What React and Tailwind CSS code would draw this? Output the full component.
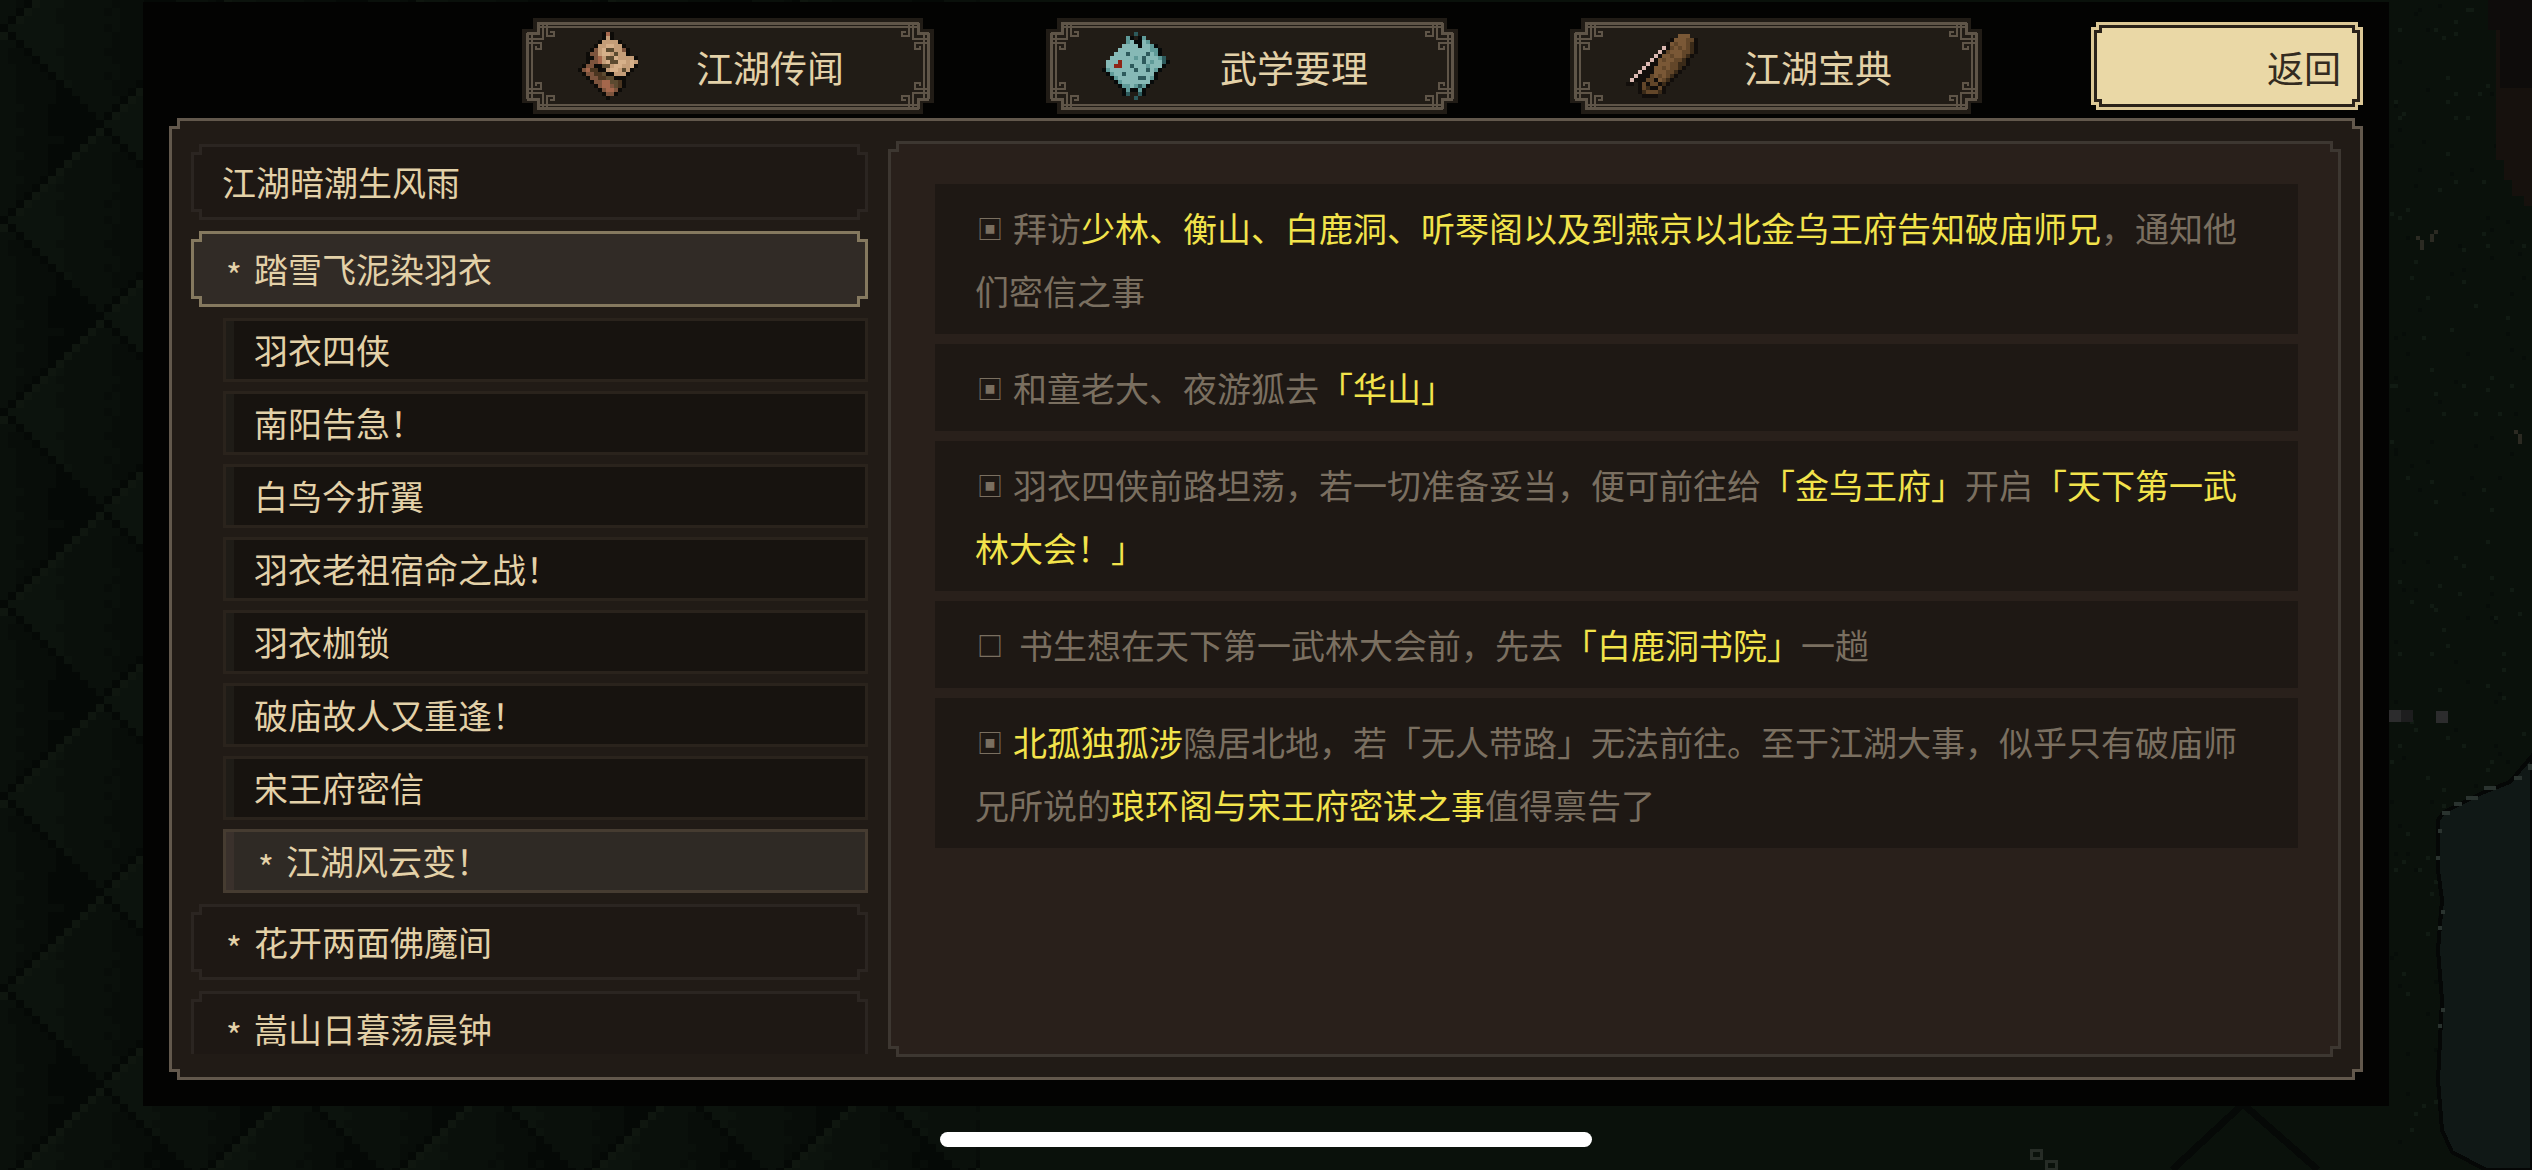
import React, { useState } from 'react';

const NOTCH =
  '[clip-path:polygon(8px_0,calc(100%_-_8px)_0,calc(100%_-_8px)_8px,100%_8px,100%_calc(100%_-_8px),calc(100%_-_8px)_calc(100%_-_8px),calc(100%_-_8px)_100%,8px_100%,8px_calc(100%_-_8px),0_calc(100%_-_8px),0_8px,8px_8px)]';
const NOTCH_SM =
  '[clip-path:polygon(5px_0,calc(100%_-_5px)_0,calc(100%_-_5px)_5px,100%_5px,100%_calc(100%_-_5px),calc(100%_-_5px)_calc(100%_-_5px),calc(100%_-_5px)_100%,5px_100%,5px_calc(100%_-_5px),0_calc(100%_-_5px),0_5px,5px_5px)]';
const NOTCH_LG =
  '[clip-path:polygon(11px_0,calc(100%_-_11px)_0,calc(100%_-_11px)_11px,100%_11px,100%_calc(100%_-_11px),calc(100%_-_11px)_calc(100%_-_11px),calc(100%_-_11px)_100%,11px_100%,11px_calc(100%_-_11px),0_calc(100%_-_11px),0_11px,11px_11px)]';

const SPRITES = {
  book: {
    colors: { k: '#0d0b08', t: '#c49d78', l: '#d6b08a', b: '#7d543d', d: '#4a3520', r: '#a5674c', o: '#5c4a30' },
    rows: [
      '......krk......',
      '......ktk......',
      '.....kttttk....',
      '....kttllttk...',
      '...kbtloottbk..',
      '..kbbtlltottk..',
      '..kkbrtoolttttk',
      '..kbbrtloolltlt',
      '.kbbkkootllttlk',
      'kbrddkktlltotk.',
      '.kbbddokktttk..',
      '..kbbddookkk...',
      '...kbbrroodk...',
      '....kbrrbodk...',
      '.....kbrrbk....',
      '......kbbk.....',
      '.......k.......',
    ],
  },
  manual: {
    colors: { c: '#86b9b6', t: '#5f9a98', d: '#2d5a5c', k: '#070a0a', r: '#8e2416' },
    rows: [
      '........d........',
      '......tk.kt......',
      '......tckkct.....',
      '.....cccckcctk...',
      '....ccccccccttk..',
      '...cccdccccdctk..',
      '..cccccctcdccctd.',
      '.cccrcccccdctccdk',
      '.ccrrccdccctccck.',
      'ktccccccdccdctk..',
      '.ktccdccccccck...',
      '..ktcccccddctk...',
      '...ktccccccck....',
      '....kttctdtk.....',
      '.....ktkktk......',
      '.....kd..dk......',
      '........d........',
    ],
  },
  scroll: {
    colors: { w: '#dcb9b2', b: '#7a5836', m: '#624629', d: '#3a2a18', k: '#120e0b' },
    rows: [
      '.............bbb..',
      '...........kbbbmmk',
      '..........kbmbbmdk',
      '.........wkmbmbmdk',
      '........wkmbbbmmdk',
      '.......wkbbmbbmdk.',
      '......wkbmbbmmdk..',
      '.....wkkbbbmmddk..',
      '....wkkbbmbmmdk...',
      '...wkkkbbbmmdk....',
      '..wkkkmbmbmdk.....',
      '.wkkkmmkbmdk......',
      'kk.kmkmmkdk.......',
      '...kmdkkmk........',
      '...kdmmmdk........',
      '....kkkk..........',
    ],
  },
};

const TABS = [
  { id: 'rumor', label: '江湖传闻', icon: 'book' },
  { id: 'martial', label: '武学要理', icon: 'manual' },
  { id: 'treasure', label: '江湖宝典', icon: 'scroll' },
];

const CHAPTERS = [
  { title: '江湖暗潮生风雨' },
  {
    title: '踏雪飞泥染羽衣',
    unread: true,
    children: [
      { title: '羽衣四侠' },
      { title: '南阳告急！' },
      { title: '白鸟今折翼' },
      { title: '羽衣老祖宿命之战！' },
      { title: '羽衣枷锁' },
      { title: '破庙故人又重逢！' },
      { title: '宋王府密信' },
      { title: '江湖风云变！', unread: true },
    ],
  },
  { title: '花开两面佛魔间', unread: true },
  { title: '嵩山日暮荡晨钟', unread: true },
];

// [text, highlighted]
const QUESTS = [
  {
    done: true,
    parts: [
      ['拜访', false],
      ['少林、衡山、白鹿洞、听琴阁以及到燕京以北金乌王府告知破庙师兄', true],
      ['，通知他们密信之事', false],
    ],
  },
  {
    done: true,
    parts: [
      ['和童老大、夜游狐去', false],
      ['「华山」', true],
    ],
  },
  {
    done: true,
    parts: [
      ['羽衣四侠前路坦荡，若一切准备妥当，便可前往给', false],
      ['「金乌王府」', true],
      ['开启', false],
      ['「天下第一武林大会！」', true],
    ],
  },
  {
    done: false,
    parts: [
      ['书生想在天下第一武林大会前，先去', false],
      ['「白鹿洞书院」', true],
      ['一趟', false],
    ],
  },
  {
    done: true,
    parts: [
      ['北孤独孤涉', true],
      ['隐居北地，若「无人带路」无法前往。至于江湖大事，似乎只有破庙师兄所说的', false],
      ['琅环阁与宋王府密谋之事', true],
      ['值得禀告了', false],
    ],
  },
];

const noise = (x, y) => {
  const n = Math.sin(x * 127.1 + y * 311.7) * 43758.5453;
  return n - Math.floor(n);
};

const Sprite = ({ name }) => {
  const { rows, colors } = SPRITES[name];
  const cols = rows[0].length;
  return (
    <svg width={cols * 4} height={rows.length * 4} viewBox={`0 0 ${cols} ${rows.length}`} shapeRendering="crispEdges" aria-hidden="true">
      {rows.flatMap((row, y) =>
        [...row].map((c, x) => (colors[c] ? <rect key={`${x}-${y}`} x={x} y={y} width="1" height="1" fill={colors[c]} /> : null))
      )}
    </svg>
  );
};

const tileColor = (x, y) => {
  const a = (x + y - 3 + 48) % 24;
  const b = (x - y + 3 + 48) % 24;
  if (a === 0 || b === 0) return '#050906';
  const depth = a + b + noise(x, y) * 5;
  if (a < 2 && b > 2) return '#0f160f';
  if (depth < 17) return '#0c130d';
  if (depth < 30) return '#0a100b';
  if (depth < 39) return '#080d09';
  return '#050906';
};

const TILE = Array.from({ length: 576 }, (_, i) => [i % 24, Math.floor(i / 24)]);

const GRASS = Array.from({ length: 260 }, (_, i) => [
  2390 + Math.floor(noise(i, 1) * 34) * 4,
  Math.floor(noise(i, 2) * 290) * 4,
  noise(i, 3) > 0.5 ? '#111b13' : '#070d09',
]);

const Scenery = () => (
  <svg className="absolute inset-0 w-full h-full" viewBox="0 0 2532 1170" preserveAspectRatio="xMidYMid slice" shapeRendering="crispEdges" aria-hidden="true">
    <defs>
      <pattern id="scales" width="192" height="192" patternUnits="userSpaceOnUse">
        {TILE.map(([x, y]) => (
          <rect key={`${x}-${y}`} x={x * 8} y={y * 8} width="8" height="8" fill={tileColor(x, y)} />
        ))}
      </pattern>
    </defs>
    <rect width="2532" height="1170" fill="#0a110b" />
    <rect width="980" height="1170" fill="url(#scales)" />
    {GRASS.map(([x, y, fill], i) => (
      <rect key={i} x={x} y={y} width="4" height="4" fill={fill} />
    ))}
    <path d="M2488 0H2532V206H2524V196H2512V180H2504V160H2496V30H2488Z" fill="#16110d" />
    <path d="M2488 0H2532V88H2500V30H2488Z" fill="#0e0c0b" />
    <path d="M2416 236h4v4h-4zM2420 240h4v10h-4zM2434 230h4v4h-4zM2430 234h4v8h-4zM2514 430h4v4h-4zM2518 434h4v10h-4z" fill="#2b2a22" />
    <path d="M2532 756L2510 782L2484 792L2444 812L2438 820V870L2442 900L2438 950L2442 1000L2438 1080L2442 1130L2452 1152L2486 1170H2532Z" fill="#101816" stroke="#050706" strokeWidth="4" />
    <path d="M2528 764h4v6h-4zM2514 776h8v4h-8zM2484 786h12v4h-12zM2466 796h12v4h-12zM2454 802h8v4h-8zM2442 811h8v4h-8zM2438 829h4v4h-4zM2436 856h4v4h-4zM2441 910h4v4h-4zM2438 926h4v4h-4zM2441 1008h4v4h-4zM2438 1024h4v4h-4z" fill="#2a332f" />
    <path d="M2389 710h12v12h-12zM2436 711h12v12h-12z" fill="#2c2c2d" />
    <path d="M2401 710h12v12h-12z" fill="#1d1d1e" />
    <path d="M2243 1104L2172 1170M2243 1104L2318 1170" stroke="#060907" strokeWidth="7" fill="none" />
    <path d="M2031 1150h10v8h-10zM2046 1161h10v8h-10z" stroke="#262c26" strokeWidth="3" fill="none" />
  </svg>
);

const Fretwork = () => (
  <g fill="none" stroke="#5f5548" strokeWidth="2">
    <path d="M5 15H16V5" strokeWidth="3" />
    <path d="M21 6V21H6" />
    <path d="M25 6V18H32V14H28" />
    <path d="M6 25H19V31H14V28" />
  </g>
);

const TabFrame = () => (
  <svg className="absolute inset-0 w-full h-full" viewBox="0 0 412 96" preserveAspectRatio="none" shapeRendering="crispEdges" aria-hidden="true">
    <g fill="#5f5548">
      <rect x="15" y="4" width="382" height="3" />
      <rect x="15" y="8" width="382" height="2" />
      <rect x="15" y="89" width="382" height="3" />
      <rect x="15" y="86" width="382" height="2" />
      <rect x="4" y="15" width="3" height="66" />
      <rect x="9" y="15" width="2" height="66" />
      <rect x="405" y="15" width="3" height="66" />
      <rect x="401" y="15" width="2" height="66" />
    </g>
    <Fretwork />
    <g transform="translate(412 0) scale(-1 1)"><Fretwork /></g>
    <g transform="translate(0 96) scale(1 -1)"><Fretwork /></g>
    <g transform="translate(412 96) scale(-1 -1)"><Fretwork /></g>
  </svg>
);

const TabButton = ({ label, icon, onClick }) => (
  <button
    type="button"
    onClick={onClick}
    className={`relative flex items-center w-[412px] h-24 pl-14 bg-[#211c16] text-[#e3d1a8] text-[37px] ${NOTCH_LG}`}
  >
    <TabFrame />
    <span className="relative w-[118px] h-24 flex items-center">
      <Sprite name={icon} />
    </span>
    <span className="relative pt-1">{label}</span>
  </button>
);

const BackButton = () => (
  <button type="button" className={`w-[272px] h-[88px] p-[3px] bg-[#dcc896] text-[37px] text-[#332b20] ${NOTCH_SM}`}>
    <span className={`block h-full p-[3px] bg-[#2a2219] ${NOTCH_SM}`}>
      <span className={`flex items-center justify-end h-full pr-4 pt-1 bg-[#ead8a6] ${NOTCH_SM}`}>返回</span>
    </span>
  </button>
);

const UnreadMark = () => <span className="w-8 pl-1 pt-3">*</span>;

const ChapterButton = ({ title, unread, active, onClick }) => (
  <button
    type="button"
    onClick={onClick}
    className={`block w-full h-[76px] shrink-0 p-[3px] text-left ${NOTCH} ${active ? 'bg-[#85795f]' : 'bg-[#2b2521]'}`}
  >
    <span className={`flex items-center h-full pl-7 ${NOTCH} ${active ? 'bg-[#312b26]' : 'bg-[#1e1814]'}`}>
      {unread && <UnreadMark />}
      <span>{title}</span>
    </span>
  </button>
);

const SectionButton = ({ title, unread, active, onClick }) => (
  <button
    type="button"
    onClick={onClick}
    className={`flex w-full h-16 border-[3px] text-left ${active ? 'border-[#463c31] bg-[#2f2a25]' : 'border-[#2a231c] bg-[#17130f]'}`}
  >
    <span className={`w-2 h-full ${active ? 'bg-[#3a312c]' : 'bg-[#1f1c17]'}`} />
    <span className="flex items-center h-full pl-5">
      {unread && <UnreadMark />}
      <span>{title}</span>
    </span>
  </button>
);

const QuestCard = ({ done, parts }) => (
  <li className="px-10 py-3 bg-[#1e1814] leading-[63px]">
    <span className={`inline-block pl-0.5 text-[26px] leading-none align-[3px] ${done ? 'w-[38px]' : 'w-11 font-bold'}`}>{done ? '▣' : '□'}</span>
    {parts.map(([text, highlighted], i) => (
      <span key={i} className={highlighted ? 'text-[#f2e34b]' : ''}>
        {text}
      </span>
    ))}
  </li>
);

const App = () => {
  const [chapter, setChapter] = useState(1);
  const [section, setSection] = useState(7);
  const [, setTab] = useState('rumor');

  return (
    <div lang="zh-CN" className="relative h-screen flex flex-col overflow-hidden bg-[#0a110b] font-['Noto_Sans_CJK_SC',sans-serif] [text-spacing-trim:space-all]">
      <Scenery />

      <main className="relative flex-1 min-h-0 mt-0.5 mx-[143px] px-[26px] pt-4 pb-[26px] flex flex-col gap-1 bg-[#030302]">
        <header className="flex items-center justify-end gap-[109px]">
          <nav className="flex gap-28">
            {TABS.map((t) => (
              <TabButton key={t.id} label={t.label} icon={t.icon} onClick={() => setTab(t.id)} />
            ))}
          </nav>
          <BackButton />
        </header>

        <section className={`flex-1 min-h-0 p-[3px] bg-[#62584c] ${NOTCH}`}>
          <div className={`flex gap-5 h-full px-[19px] py-5 bg-[#211b16] text-[34px] leading-[48px] ${NOTCH}`}>
            <nav className="w-[677px] shrink-0 py-[3px]">
              <div className="h-full flex flex-col gap-[11px] overflow-hidden text-[#e3d1a8]">
                {CHAPTERS.map((c, i) => (
                  <React.Fragment key={c.title}>
                    <ChapterButton title={c.title} unread={c.unread} active={chapter === i} onClick={() => setChapter(i)} />
                    {chapter === i && c.children && (
                      <div className="flex flex-col gap-[9px] pl-8 shrink-0">
                        {c.children.map((s, j) => (
                          <SectionButton key={s.title} title={s.title} unread={s.unread} active={section === j} onClick={() => setSection(j)} />
                        ))}
                      </div>
                    )}
                  </React.Fragment>
                ))}
              </div>
            </nav>

            <article className={`flex-1 min-w-0 p-[3px] bg-[#3d3731] ${NOTCH}`}>
              <ul className={`flex flex-col gap-2.5 h-full pl-11 pr-10 pt-10 bg-[#29201b] text-[#7a6f60] ${NOTCH}`}>
                {QUESTS.map((q, i) => (
                  <QuestCard key={i} done={q.done} parts={q.parts} />
                ))}
              </ul>
            </article>
          </div>
        </section>
      </main>

      <footer className="relative h-16 shrink-0 flex justify-center items-end pb-[23px]">
        <div className="w-[652px] h-[15px] rounded-full bg-white" />
      </footer>
    </div>
  );
};

export default App;
